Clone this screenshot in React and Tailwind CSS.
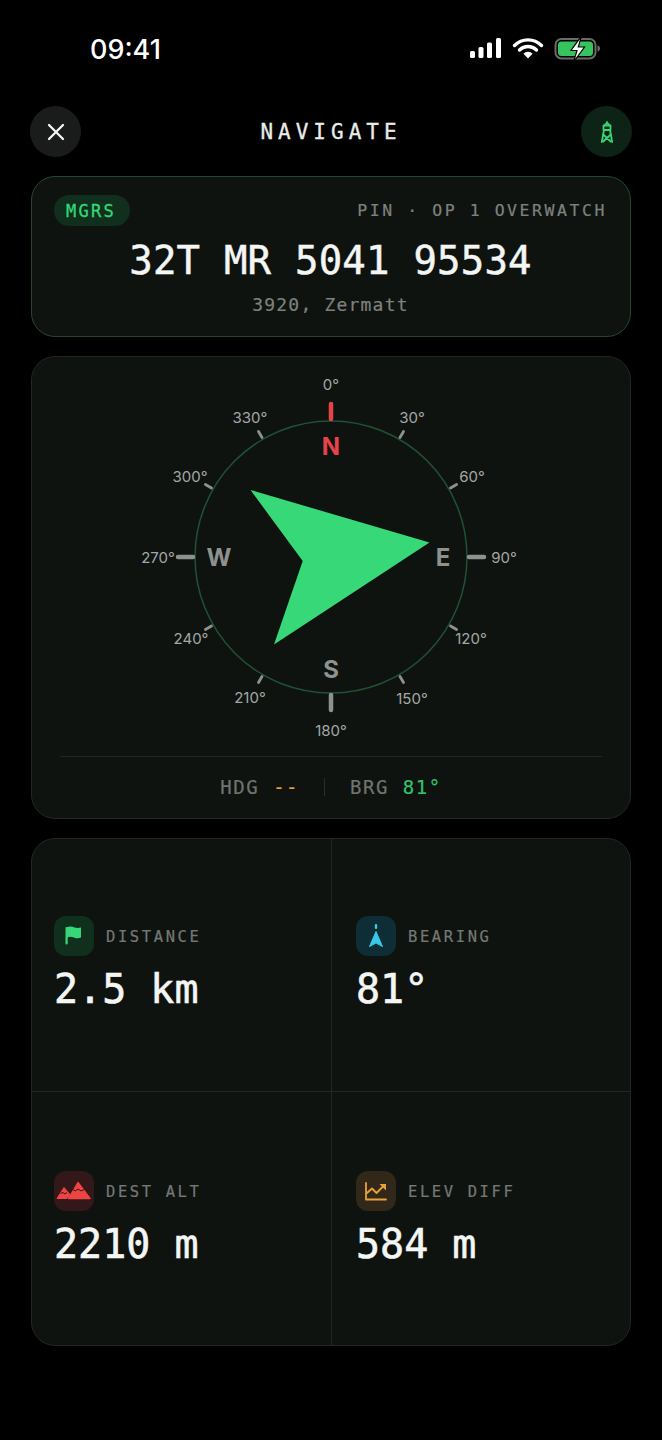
const MONO = "font-['DejaVu_Sans_Mono',monospace]"

const TICKS = [0, 30, 60, 90, 120, 150, 180, 210, 240, 270, 300, 330]

function polar(deg, r) {
  const a = ((deg - 90) * Math.PI) / 180
  return [331 + r * Math.cos(a), 557 + r * Math.sin(a)]
}

function StatusBar() {
  return (
    <div className="h-[106px] flex items-start justify-between pl-[90px] pr-[60px] pt-[33px]">
      <span className="font-['Inter',sans-serif] text-[27px] leading-[34px] font-medium text-white">09:41</span>
      <svg width="132" height="26" viewBox="0 0 132 26" className="mt-[4px]">
        <rect x="0" y="14" width="5" height="7" rx="1.5" fill="#fff" />
        <rect x="8.5" y="10" width="5" height="11" rx="1.5" fill="#fff" />
        <rect x="17" y="5.5" width="5" height="15.5" rx="1.5" fill="#fff" />
        <rect x="26" y="1" width="5" height="20" rx="1.5" fill="#fff" />
        <path d="M44.5 8.5a19 19 0 0 1 27 0" fill="none" stroke="#fff" strokeWidth="3.4" strokeLinecap="round" />
        <path d="M49.5 13a12 12 0 0 1 17 0" fill="none" stroke="#fff" strokeWidth="3.4" strokeLinecap="round" />
        <path d="M58 21.5l-4.600-4.800a6.600 6.600 0 0 1 9.200 0z" fill="#fff" />
        <rect x="85.5" y="2" width="40" height="19.5" rx="6" fill="none" stroke="#6b6b6b" strokeWidth="2" />
        <rect x="88" y="4.5" width="35" height="14.5" rx="3.5" fill="#36c45f" />
        <path d="M127.500 8.500c2 .4 2.500 1.600 2.500 3s-.5 2.600-2.500 3z" fill="#6b6b6b" />
        <path d="M111.500 -1l-10.500 14.500h6L103.500 25l11-15h-6.200z" fill="#fff" stroke="#000" strokeWidth="1.200" />
      </svg>
    </div>
  )
}

function Header() {
  return (
    <div className="h-[51px] flex items-center justify-between">
      <button className="w-[51px] h-[51px] rounded-full bg-[#1a1c1b] flex items-center justify-center">
        <svg width="24" height="24" viewBox="0 0 24 24" fill="none" stroke="#f2f4f2" strokeWidth="2.300" strokeLinecap="round">
          <path d="M5 5l14 14M19 5L5 19" />
        </svg>
      </button>
      <span className={`${MONO} text-[21px] leading-[26px] tracking-[5px] text-[#e9ece9] [-webkit-text-stroke:0.3px]`}>NAVIGATE</span>
      <button className="w-[51px] h-[51px] rounded-full bg-[#0c2316] flex items-center justify-center">
        <svg width="24" height="24" viewBox="0 0 24 24" fill="none" stroke="#37d677" strokeWidth="1.800" strokeLinejoin="round" strokeLinecap="round">
          <path d="M8.500 5.500h7v4.500h-7z" />
          <path d="M10 5.500a2 2 0 0 1 4 0" />
          <path d="M12 2v1.500" />
          <path d="M9 10L6.800 22M15 10l2.200 12" />
          <path d="M8.300 14.500l7.400 7M15.700 14.500l-7.400 7" />
        </svg>
      </button>
    </div>
  )
}

function PinCard() {
  return (
    <div className={`${MONO} mx-[1px] h-[161px] rounded-[24px] bg-[#0f1310] border border-[#24482f] pt-[17px] pl-[22px] pr-[23px]`}>
      <div className="flex items-center justify-between">
        <span className="h-[31px] pl-[12px] pr-[14px] rounded-full bg-[#10301d] text-[#37d677] text-[17px] leading-[33px] tracking-[2.300px] [-webkit-text-stroke:0.3px]">MGRS</span>
        <span className="text-[#7d827e] text-[16.500px] leading-[33px] tracking-[2.550px] [-webkit-text-stroke:0.2px]">PIN · OP 1 OVERWATCH</span>
      </div>
      <div className="mt-[11px] text-center text-[#f3f6f3] text-[39px] leading-[46px] tracking-[0.200px] [-webkit-text-stroke:0.5px]">32T MR 5041 95534</div>
      <div className="mt-[9px] text-center text-[#7d827e] text-[18px] leading-[24px] tracking-[1.200px] [-webkit-text-stroke:0.2px]">3920, Zermatt</div>
    </div>
  )
}

function CompassDial() {
  const labels = {
    0: [331, 384], 30: [412, 417], 60: [472, 476], 90: [504, 557],
    120: [471, 638], 150: [412, 698], 180: [331, 730], 210: [250, 697],
    240: [191, 638], 270: [158, 557], 300: [190, 476], 330: [250, 417],
  }
  return (
    <svg width="598" height="399" viewBox="32 357 598 399" className="block">
      <circle cx="331" cy="557" r="136" fill="none" stroke="#1f5235" strokeWidth="1.500" />
      {TICKS.map((deg) => {
        const major = deg % 90 === 0
        const [x1, y1] = polar(deg, 138)
        const [x2, y2] = polar(deg, major ? 153 : 145)
        return (
          <line
            key={deg}
            x1={x1}
            y1={y1}
            x2={x2}
            y2={y2}
            stroke={deg === 0 ? '#e5434a' : '#8e928f'}
            strokeWidth={major ? 4.500 : 2.800}
            strokeLinecap="round"
          />
        )
      })}
      {TICKS.map((deg) => (
        <text key={deg} x={labels[deg][0]} y={labels[deg][1]} textAnchor="middle" dominantBaseline="central" fill="#a4a8a5" fontFamily="Inter, sans-serif" fontSize="15">
          {deg}°
        </text>
      ))}
      <g fontFamily="Inter, sans-serif" fontSize="24" fontWeight="700" textAnchor="middle" dominantBaseline="central">
        <text x="331" y="446" fill="#e5434a">N</text>
        <text x="331" y="669" fill="#8e928f">S</text>
        <text x="219" y="557" fill="#8e928f">W</text>
        <text x="443" y="557" fill="#8e928f">E</text>
      </g>
      <polygon points="429.500,542.500 250.500,490 302.700,561 274,644.500" fill="#36d877" />
    </svg>
  )
}

function CompassCard() {
  return (
    <div className="mx-[1px] h-[463px] mt-[19px] rounded-[24px] bg-[#0f1310] border border-[#222624] overflow-hidden">
      <CompassDial />
      <div className={`${MONO} mx-[28px] h-[61px] border-t border-[#222624] flex items-center justify-center text-[19px] tracking-[1.500px] text-[#6f7470] [-webkit-text-stroke:0.2px]`}>
        <span>HDG</span>
        <span className="ml-[14px] text-[#e9a23b]">--</span>
        <span className="mx-[25px] w-px h-[18px] bg-[#2b2f2c]"></span>
        <span>BRG</span>
        <span className="ml-[14px] text-[#2fc46c]">81°</span>
      </div>
    </div>
  )
}

function FlagIcon() {
  return (
    <svg width="24" height="24" viewBox="0 0 24 24">
      <rect x="3.500" y="3" width="2.200" height="17.500" rx="1" fill="#37d677" />
      <path d="M4.500 3.500c3-1.500 5.500-.8 8 0 2.200.7 4.200.6 6.500 0v10c-2.200.9-4.200 1-6.500.2-2.700-1-5.200-1.500-8 0z" fill="#37d677" />
    </svg>
  )
}

function BearingIcon() {
  return (
    <svg width="24" height="28" viewBox="0 0 24 28">
      <rect x="10.800" y="2" width="2.400" height="5" rx="1" fill="#35c8e8" />
      <path d="M12 9.500l6.500 15-6.500-3.500-6.500 3.500z" fill="#35c8e8" stroke="#35c8e8" strokeLinejoin="round" />
    </svg>
  )
}

function MountainIcon() {
  return (
    <svg width="40" height="40" viewBox="0 0 40 40">
      <path d="M3 27.500 10 16.500l6 7-3 4z" fill="#ef4444" stroke="#ef4444" strokeLinejoin="round" />
      <path d="M14.500 27.500 24 11.500l12 16z" fill="#ef4444" stroke="#ef4444" strokeWidth="1.400" strokeLinejoin="round" />
      <path d="M18.500 18.500l3 1.400 2.500-1.900 3 1.900 3.500-1.400" fill="none" stroke="#341719" strokeWidth="1" />
      <path d="M6.500 22.500l2.500-1 2 1.500 2-1.500" fill="none" stroke="#341719" strokeWidth="1" />
    </svg>
  )
}

function ChartIcon() {
  return (
    <svg width="24" height="24" viewBox="0 0 24 24" fill="none" stroke="#e9a23b" strokeWidth="1.800" strokeLinecap="round" strokeLinejoin="round">
      <path d="M2 4v16.500h20" />
      <path d="M3 14l5-4.500 4.500 4.500 7-7" />
      <path d="M15.500 5h6.500v6.500z" fill="#e9a23b" stroke="none" />
    </svg>
  )
}

function Stat({ icon, tint, label, value, className }) {
  return (
    <div className={`${className} flex flex-col justify-center`}>
      <div className="flex items-center gap-[12px]">
        <div className={`w-[40px] h-[40px] rounded-[12px] flex items-center justify-center ${tint}`}>{icon}</div>
        <span className={`${MONO} pt-[4px] text-[15.500px] tracking-[2.600px] text-[#747975] [-webkit-text-stroke:0.2px]`}>{label}</span>
      </div>
      <div className={`${MONO} mt-[8px] text-[40px] leading-[50px] text-[#f3f6f3] [-webkit-text-stroke:0.6px]`}>{value}</div>
    </div>
  )
}

function StatsCard() {
  return (
    <div className="mx-[1px] h-[508px] mt-[19px] rounded-[24px] bg-[#0f1310] border border-[#222624] grid grid-cols-[300px_298px] grid-rows-2">
      <Stat className="pl-[22px] border-r border-b border-[#222624]" icon={<FlagIcon />} tint="bg-[#10301d]" label="DISTANCE" value="2.5 km" />
      <Stat className="pl-[24px] border-b border-[#222624]" icon={<BearingIcon />} tint="bg-[#0e2d35]" label="BEARING" value="81°" />
      <Stat className="pl-[22px] pt-[3px] border-r border-[#222624]" icon={<MountainIcon />} tint="bg-[#341719]" label="DEST ALT" value="2210 m" />
      <Stat className="pl-[24px] pt-[3px]" icon={<ChartIcon />} tint="bg-[#32281a]" label="ELEV DIFF" value="584 m" />
    </div>
  )
}

export default function App() {
  return (
    <div className="w-[662px] h-[1440px] bg-black overflow-hidden">
      <StatusBar />
      <div className="px-[30px]">
        <Header />
        <div className="h-[19px]"></div>
        <PinCard />
        <CompassCard />
        <StatsCard />
      </div>
    </div>
  )
}
